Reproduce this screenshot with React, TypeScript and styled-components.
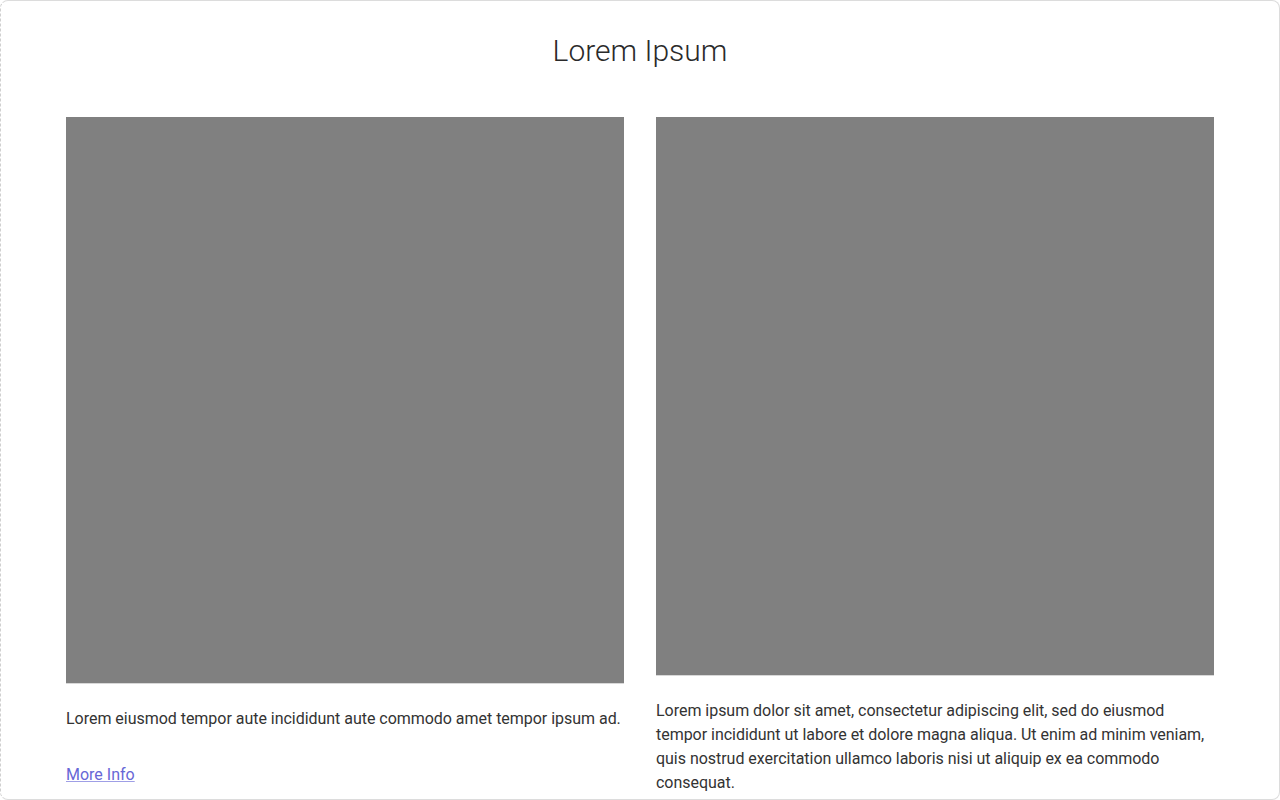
import React from "react";
import styled, { createGlobalStyle } from "styled-components";

const Global = createGlobalStyle`
  html, body { margin: 0; padding: 0; background: #fff; }
  body { font-family: Roboto, "Liberation Sans", sans-serif; color: #333; }
  * { box-sizing: border-box; }
`;

const Frame = styled.div`
  width: 1280px;
  height: 800px;
  border: 1px solid #dcdcdc;
  border-left: 1px dashed #d0d0d0;
  border-radius: 8px;
  overflow: hidden;
  padding: 0 65px;
  background: #fff;
`;

const Title = styled.h1`
  margin: 0;
  padding: 31px 0 0;
  height: 116px;
  text-align: center;
  font-family: Roboto, "Liberation Sans", sans-serif;
  font-weight: 300;
  font-size: 30px;
  line-height: 38px;
  color: #2a2a2a;
`;

const Grid = styled.div`
  display: grid;
  grid-template-columns: 558px 558px;
  column-gap: 32px;
  align-items: start;
`;

const Card = styled.div`
  display: flex;
  flex-direction: column;
`;

const Picture = styled.div<{ $h: number }>`
  height: ${(p) => p.$h}px;
  background: #808080;
  box-shadow: 0 1px 0 #d8d8d8;
`;

const Text = styled.p`
  margin: 24px 0 0;
  font-size: 16px;
  line-height: 24px;
  letter-spacing: -0.03px;
  color: #333;
`;

const Link = styled.a`
  margin-top: 32px;
  align-self: flex-start;
  font-size: 16px;
  line-height: 24px;
  color: #6767d6;
  text-decoration: underline;
  text-decoration-color: #9f9fe6;
`;

export default function App() {
  return (
    <>
      <Global />
      <Frame>
        <Title>Lorem Ipsum</Title>
        <Grid>
          <Card>
            <Picture $h={566} />
            <Text>Lorem eiusmod tempor aute incididunt aute commodo amet tempor ipsum ad.</Text>
            <Link href="#">More Info</Link>
          </Card>
          <Card>
            <Picture $h={558} />
            <Text>
              Lorem ipsum dolor sit amet, consectetur adipiscing elit, sed do eiusmod tempor incididunt ut
              labore et dolore magna aliqua. Ut enim ad minim veniam, quis nostrud exercitation ullamco laboris
              nisi ut aliquip ex ea commodo consequat.
            </Text>
          </Card>
        </Grid>
      </Frame>
    </>
  );
}
